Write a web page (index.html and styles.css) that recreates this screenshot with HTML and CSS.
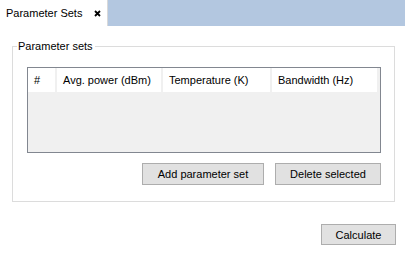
FILE: index.html
```html
<!DOCTYPE html>
<html>
<head>
    <title>Parameter Sets</title>
    <meta charset="UTF-8">
    <link rel="stylesheet" href="styles.css">
</head>
<body>
    <div class="tab-bar">
        <div class="tab">
            <span>Parameter Sets</span>
            <svg class="tab-close" width="7" height="7" viewBox="0 0 7 7">
                <path d="M1 1 L6 6 M6 1 L1 6" stroke="#000" stroke-width="1.8"/>
            </svg>
        </div>
    </div>

    <div class="content">
        <fieldset class="group">
            <legend>Parameter sets</legend>

            <div class="table">
                <div class="table-header">
                    <div class="col col-id">#</div>
                    <div class="col col-power">Avg. power (dBm)</div>
                    <div class="col col-temp">Temperature (K)</div>
                    <div class="col col-bw">Bandwidth (Hz)</div>
                </div>
            </div>

            <div class="button-row">
                <button class="btn btn-add">Add parameter set</button>
                <button class="btn btn-delete">Delete selected</button>
            </div>
        </fieldset>

        <div class="footer">
            <button class="btn btn-calc">Calculate</button>
        </div>
    </div>
</body>
</html>
```

FILE: styles.css
```css
body {
    margin: 0;
    width: 405px;
    height: 253px;
    background-color: white;
    font-family: "Liberation Sans", Arial, sans-serif;
    font-size: 11px;
    color: #000;
    overflow: hidden;
}
.tab-bar {
    display: flex;
    height: 26px;
    background-color: #b3c7e0;
}
.tab {
    display: flex;
    align-items: center;
    flex-shrink: 0;
    width: 101px;
    padding-left: 6px;
    white-space: nowrap;
    background-color: white;
    border-right: 1px solid #d9d9d9;
}
.tab-close {
    margin-left: 12px;
    margin-top: 1px;
}
.content {
    padding-top: 13px;
}
.group {
    margin: 0 10px 0 12px;
    padding: 14px 13px 14px 14px;
    border: 1px solid #dcdcdc;
    box-sizing: border-box;
    height: 163px;
}
.group legend {
    margin-left: -10px;
    padding: 0 2px 0 1px;
    line-height: 14px;
}
.table {
    height: 86px;
    box-sizing: border-box;
    border: 1px solid #828790;
    background-color: #f0f0f0;
}
.table-header {
    display: flex;
    height: 24px;
}
.col {
    display: flex;
    align-items: center;
    padding-left: 6px;
    background-color: white;
    border-right: 2px solid #f0f0f0;
    box-sizing: border-box;
}
.col-id { width: 29px; }
.col-power { width: 106px; }
.col-temp { width: 109px; }
.col-bw { width: 107px; }
.button-row {
    display: flex;
    justify-content: flex-end;
    gap: 11px;
    margin-top: 10px;
}
.btn {
    height: 22px;
    padding: 0;
    font-family: inherit;
    font-size: 11px;
    color: #000;
    background-color: #e1e1e1;
    border: 1px solid #adadad;
}
.btn-add { width: 122px; }
.btn-delete { width: 106px; }
.footer {
    display: flex;
    justify-content: flex-end;
    margin-top: 22px;
    padding-right: 9px;
}
.btn-calc {
    width: 75px;
    height: 21px;
}
```
